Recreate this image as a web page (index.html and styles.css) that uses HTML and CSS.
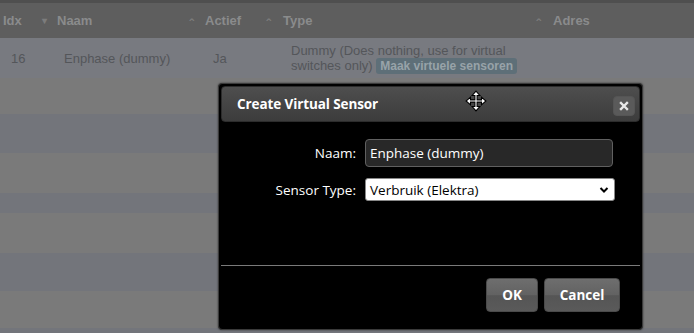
FILE: index.html
```html
<!DOCTYPE html>
<html>
<head>
<meta charset="utf-8">
<link rel="stylesheet" href="styles.css">
</head>
<body>
<div class="page">
  <div class="topbar"></div>
  <table class="grid">
    <thead>
      <tr>
        <th class="c-idx">Idx <span class="sort">&#9662;</span></th>
        <th class="c-naam">Naam <span class="sort up">&#710;</span></th>
        <th class="c-act">Actief <span class="sort up">&#710;</span></th>
        <th class="c-type">Type <span class="sort up">&#710;</span></th>
        <th class="c-adres">Adres</th>
      </tr>
    </thead>
    <tbody>
      <tr class="r1">
        <td class="c-idx">16</td>
        <td class="c-naam">Enphase (dummy)</td>
        <td class="c-act">Ja</td>
        <td class="c-type">Dummy (Does nothing, use for virtual<br>switches only) <span class="badge">Maak virtuele sensoren</span></td>
        <td class="c-adres"></td>
      </tr>
      <tr class="r h36 alt"><td colspan="5"></td></tr>
      <tr class="r h39 blue"><td colspan="5"></td></tr>
      <tr class="r h40 alt"><td colspan="5"></td></tr>
      <tr class="r h20 blue"><td colspan="5"></td></tr>
      <tr class="r h40 alt"><td colspan="5"></td></tr>
      <tr class="r h38 blue"><td colspan="5"></td></tr>
      <tr class="r h37 alt"><td colspan="5"></td></tr>
      <tr class="r h20 blue"><td colspan="5"></td></tr>
    </tbody>
  </table>

  <div class="modal">
    <div class="titlebar">
      <span class="title">Create Virtual Sensor</span>
      <svg class="move" width="22" height="22" viewBox="0 0 20 20">
        <path d="M10 1 L13.5 5 L11 5 L11 9 L15 9 L15 6.5 L19 10 L15 13.5 L15 11 L11 11 L11 15 L13.5 15 L10 19 L6.5 15 L9 15 L9 11 L5 11 L5 13.5 L1 10 L5 6.5 L5 9 L9 9 L9 5 L6.5 5 Z" fill="#fff" stroke="#000" stroke-width="1"/>
      </svg>
      <button class="close" type="button">
        <svg width="10" height="10" viewBox="0 0 10 10"><path d="M2 2 L8 8 M8 2 L2 8" stroke="#e8e8e8" stroke-width="2.4" stroke-linecap="square"/></svg>
      </button>
    </div>
    <div class="body">
      <div class="field">
        <label class="lbl">Naam:</label>
        <div class="input">Enphase (dummy)</div>
      </div>
      <div class="field">
        <label class="lbl">Sensor Type:</label>
        <div class="select">
          <span>Verbruik (Elektra)</span>
          <svg width="10" height="8" viewBox="0 0 10 8"><path d="M1.5 2 L5 5.5 L8.5 2" fill="none" stroke="#000" stroke-width="2"/></svg>
        </div>
      </div>
    </div>
    <div class="footer">
      <button class="btn ok" type="button">OK</button>
      <button class="btn cancel" type="button">Cancel</button>
    </div>
  </div>
</div>
</body>
</html>
```
FILE: styles.css
```css
* { box-sizing: border-box; }
html, body { margin: 0; padding: 0; }
body {
  width: 694px;
  height: 333px;
  overflow: hidden;
  background: #74767b;
  font-family: "Liberation Sans", Arial, sans-serif;
}
.page { position: relative; width: 694px; height: 333px; overflow: hidden; }
.topbar { height: 3px; background: #4f4f4f; }
.grid {
  width: 694px;
  border-collapse: collapse;
  table-layout: fixed;
}
.grid th {
  background: #5e5e5e;
  color: #8a8b8c;
  font-weight: bold;
  font-size: 13px;
  text-align: left;
  height: 35px;
  padding: 0 0 0 3px;
  white-space: nowrap;
}
.grid .sort { font-size: 10px; color: #7c7c7c; float: right; margin-right: 5px; position: relative; top: 2px; }
.grid .sort.up { font-size: 14px; top: 4px; margin-right: 8px; }
.c-idx { width: 52px; }
.c-naam { width: 150px; }
.c-act { width: 77px; }
.c-type { width: 270px; }
.grid th.c-idx { padding-left: 3px; }
.grid th.c-naam { padding-left: 5px; }
.grid th.c-act { padding-left: 3px; }
.grid th.c-type { padding-left: 4px; }
.grid th.c-adres { padding-left: 4px; }
.grid td { padding: 0; color: #54565a; font-size: 13px; }
.r1 td { background: #787a80; height: 40px; vertical-align: middle; }
.r1 .c-idx { padding-left: 11px; }
.r1 .c-naam { padding-left: 12px; }
.r1 .c-act { padding-left: 11px; }
.r1 .c-type { padding-left: 12px; line-height: 15px; padding-top: 1px; }
.badge {
  display: inline-block;
  background: #5e6f78;
  color: #98a3a9;
  font-weight: bold;
  font-size: 12px;
  line-height: 14px;
  padding: 1px 4px;
  border-radius: 3px;
}
.r td { padding: 0; }
.alt td { background: #7a7a7a; }
.blue td { background: #73757b; }
.h36 td { height: 36px; }
.h39 td { height: 39px; }
.h40 td { height: 40px; }
.h20 td { height: 20px; }
.h38 td { height: 38px; }
.h37 td { height: 37px; }

.modal {
  position: absolute;
  left: 218px;
  top: 83px;
  width: 425px;
  height: 247px;
  background: #000;
  border: 1px solid #3a3a3a;
  border-radius: 4px;
  padding: 2px;
  display: flex;
  flex-direction: column;
  font-family: "Open Sans", "Noto Sans", sans-serif;
  box-shadow: 0 0 2px rgba(0,0,0,0.6);
}
.titlebar {
  height: 36px;
  background: linear-gradient(#4e4e4e, #3c3c3c);
  border: 1px solid #2c2c2c;
  border-radius: 4px;
  display: flex;
  align-items: center;
  padding: 0 4px 0 15px;
  position: relative;
}
.title {
  color: #fff;
  font-weight: bold;
  font-size: 13.5px;
  letter-spacing: -0.1px;
  flex: 1;
}
.move { position: absolute; left: 243px; top: 3px; }
.close {
  width: 22px;
  height: 20px;
  border: 1px solid #555;
  border-radius: 4px;
  background: #5a5a5a;
  padding: 0;
  display: flex;
  align-items: center;
  justify-content: center;
  margin-top: 4px;
}
.body {
  flex: 1;
  padding-top: 17px;
  display: flex;
  flex-direction: column;
  gap: 11px;
  border-bottom: 1px solid #7a7a7a;
}
.field { display: flex; align-items: center; }
.lbl {
  width: 144px;
  text-align: right;
  color: #fff;
  font-size: 13.5px;
  padding-right: 9px;
}
.input {
  width: 248px;
  height: 28px;
  background: #282828;
  border: 1px solid #606060;
  border-radius: 4px;
  color: #fff;
  font-size: 13.5px;
  display: flex;
  align-items: center;
  padding-left: 4px;
}
.select {
  width: 250px;
  height: 23px;
  background: #fff;
  border: 1px solid #888;
  border-radius: 3px;
  color: #000;
  font-size: 13.5px;
  display: flex;
  align-items: center;
  justify-content: space-between;
  padding: 0 5px 0 4px;
}
.footer {
  height: 61px;
  display: flex;
  justify-content: flex-end;
  align-items: center;
  gap: 6px;
  padding: 0 20px 3px 0;
}
.btn {
  height: 34px;
  border: 1px solid #4a4a4a;
  border-radius: 4px;
  background: linear-gradient(#6e6e6e 0%, #626262 50%, #555 52%, #5a5a5a 100%);
  color: #fff;
  font-family: "Open Sans", "Noto Sans", sans-serif;
  font-weight: bold;
  font-size: 13.5px;
  padding: 0;
}
.ok { width: 52px; }
.cancel { width: 76px; }
```
